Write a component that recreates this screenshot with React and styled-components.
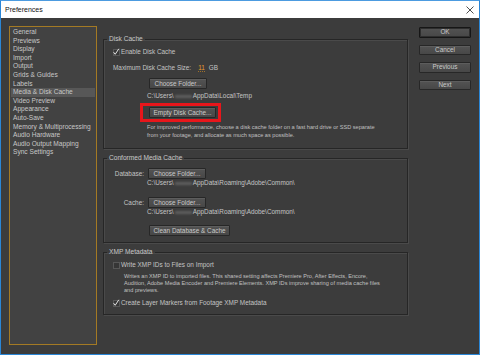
import styled, { createGlobalStyle } from 'styled-components';

const GlobalStyle = createGlobalStyle`
  html, body {
    margin: 0;
    padding: 0;
    background: #3c3c3c;
  }
  * {
    box-sizing: border-box;
  }
`;

// Outer window frame
const Window = styled.div`
  width: 480px;
  height: 355px;
  border: 1px solid #2a86d6;
  border-top-color: #4c9be0;
  display: flex;
  flex-direction: column;
  font-family: "Liberation Sans", Arial, sans-serif;
  color: #c4c4c4;
  overflow: hidden;
`;

const TitleBar = styled.div`
  height: 17px;
  background: #fff;
  display: flex;
  align-items: center;
  justify-content: space-between;
  padding: 0 5px 0 4px;
  color: #111;
  font-size: 7px;
  flex-shrink: 0;
`;

const Body = styled.div`
  flex: 1;
  background: #3c3c3c;
  display: flex;
  padding: 8px 8px 9px 8px;
  gap: 6px;
`;

// Left category list
const CategoryList = styled.ul`
  width: 88px;
  flex-shrink: 0;
  margin: 0;
  padding: 1px 1px;
  list-style: none;
  border: 1px solid #a47a24;
  background: #424242;
`;

const Category = styled.li`
  height: 8.6px;
  line-height: 8.6px;
  font-size: 6.6px;
  padding-left: 2px;
  white-space: nowrap;
  color: #c8c8c8;
  background: ${(p) => (p.$active ? '#575757' : 'transparent')};
`;

const Main = styled.div`
  width: 305px;
  flex-shrink: 0;
  display: flex;
  flex-direction: column;
  gap: 5px;
  padding-top: 9px;
`;

// Group boxes
const Group = styled.fieldset`
  margin: 0;
  padding: 0 0 ${(p) => p.$pb || 7}px 0;
  border: 1px solid #262626;
  box-shadow: inset 1px 1px 0 #4a4a4a, 1px 1px 0 #4a4a4a;
  display: flex;
  flex-direction: column;
  min-width: 0;
`;

const Legend = styled.legend`
  font-size: 6.6px;
  line-height: 8px;
  height: 8px;
  padding: 0 2px;
  margin-left: 3px;
  color: #c8c8c8;
`;

const Row = styled.div`
  display: flex;
  align-items: center;
  gap: ${(p) => p.$gap || 0}px;
  margin-top: ${(p) => p.$mt || 0}px;
  padding-left: ${(p) => p.$indent || 0}px;
  min-height: 8px;
  font-size: 6.4px;
  line-height: 8px;
  white-space: nowrap;
`;

const FieldLabel = styled.span`
  width: 31px;
  text-align: right;
  margin-right: 4px;
`;

const Path = styled.div`
  margin-top: ${(p) => p.$mt || 0}px;
  padding-left: 43px;
  height: 8px;
  font-size: 6.4px;
  line-height: 8px;
  white-space: nowrap;
`;

const Blur = styled.span`
  display: inline-block;
  width: 17px;
  height: 3px;
  margin: 0 1px;
  vertical-align: middle;
  background: #5e5e5e;
  filter: blur(0.8px);
`;

const Description = styled.div`
  margin-top: ${(p) => p.$mt || 0}px;
  padding-left: ${(p) => p.$indent || 0}px;
  padding-right: 20px;
  font-size: 5.6px;
  line-height: ${(p) => p.$lh || 8}px;
  color: #c0c0c0;
`;

const Hot = styled.span`
  color: #e59c2f;
  margin: 0 4px 0 7px;
  border-bottom: 1px dotted #a0702a;
  line-height: 7px;
`;

const Button = styled.button`
  display: block;
  width: ${(p) => p.$w}px;
  height: ${(p) => p.$h || 11}px;
  padding: 0;
  font-family: "Liberation Sans", Arial, sans-serif;
  font-size: 6.4px;
  line-height: 8px;
  color: #cacaca;
  background: linear-gradient(#535353, #474747);
  border: 1px solid ${(p) => (p.$primary ? '#161616' : '#272727')};
  box-shadow: ${(p) =>
    p.$primary ? 'inset 0 0 0 1px #2e2e2e' : 'inset 0 1px 0 #5d5d5d'};
  border-radius: 1px;
  flex-shrink: 0;
`;

// Annotation box drawn over the button
const Highlighted = styled.div`
  position: relative;
  width: fit-content;

  &::after {
    content: '';
    position: absolute;
    left: -9px;
    top: -4px;
    right: -5px;
    bottom: -4px;
    border: 3px solid #e8161b;
  }
`;

const ButtonIndent = styled.div`
  display: flex;
  margin-top: ${(p) => p.$mt || 0}px;
  padding-left: 45px;
`;

const Actions = styled.div`
  width: 52px;
  margin-left: 5px;
  padding-top: 1px;
  display: flex;
  flex-direction: column;
  gap: 7px;
`;

const CheckMark = ({ checked }) => (
  <svg width="8" height="8" viewBox="0 0 8 8" style={{ flexShrink: 0 }}>
    <rect x="1.5" y="1.5" width="6" height="6" fill="#363636" stroke="#575757" />
    {checked && (
      <path d="M1.6 4.2 L3.2 6.3 L6.8 0.8" fill="none" stroke="#e4e4e4" strokeWidth="1" />
    )}
  </svg>
);

const categories = [
  'General',
  'Previews',
  'Display',
  'Import',
  'Output',
  'Grids & Guides',
  'Labels',
  'Media & Disk Cache',
  'Video Preview',
  'Appearance',
  'Auto-Save',
  'Memory & Multiprocessing',
  'Audio Hardware',
  'Audio Output Mapping',
  'Sync Settings',
];

const UserPath = ({ rest }) => (
  <>
    C:\Users\<Blur />
    {rest}
  </>
);

const App = () => {
  return (
    <>
      <GlobalStyle />
      <Window>
        <TitleBar>
          <span>Preferences</span>
          <svg width="8" height="8" viewBox="0 0 8 8">
            <path d="M0.5 0.5 L7.5 7.5 M7.5 0.5 L0.5 7.5" stroke="#222" strokeWidth="0.8" />
          </svg>
        </TitleBar>
        <Body>
          <CategoryList>
            {categories.map((c) => (
              <Category key={c} $active={c === 'Media & Disk Cache'}>
                {c}
              </Category>
            ))}
          </CategoryList>

          <Main>
            <Group $pb={9}>
              <Legend>Disk Cache</Legend>
              <Row $mt={5} $indent={8} $gap={1}>
                <CheckMark checked />
                Enable Disk Cache
              </Row>
              <Row $mt={8} $indent={9}>
                Maximum Disk Cache Size:
                <Hot>11</Hot>
                GB
              </Row>
              <ButtonIndent $mt={6}>
                <Button $w={58}>Choose Folder...</Button>
              </ButtonIndent>
              <Path $mt={3}>
                <UserPath rest="AppData\Local\Temp" />
              </Path>
              <ButtonIndent $mt={7}>
                <Highlighted>
                  <Button $w={67}>Empty Disk Cache...</Button>
                </Highlighted>
              </ButtonIndent>
              <Description $mt={5} $indent={43}>
                For improved performance, choose a disk cache folder on a fast hard drive or SSD separate
                from your footage, and allocate as much space as possible.
              </Description>
            </Group>

            <Group $pb={6}>
              <Legend>Conformed Media Cache</Legend>
              <Row $mt={6} $indent={9}>
                <FieldLabel>Database:</FieldLabel>
                <Button $w={58}>Choose Folder...</Button>
              </Row>
              <Path>
                <UserPath rest="AppData\Roaming\Adobe\Common\" />
              </Path>
              <Row $mt={10} $indent={9}>
                <FieldLabel>Cache:</FieldLabel>
                <Button $w={58}>Choose Folder...</Button>
              </Row>
              <Path>
                <UserPath rest="AppData\Roaming\Adobe\Common\" />
              </Path>
              <ButtonIndent $mt={9}>
                <Button $w={81}>Clean Database &amp; Cache</Button>
              </ButtonIndent>
            </Group>

            <Group $pb={7}>
              <Legend>XMP Metadata</Legend>
              <Row $mt={5} $indent={8} $gap={1}>
                <CheckMark />
                Write XMP IDs to Files on Import
              </Row>
              <Description $mt={3.5} $indent={20} $lh={7.2}>
                Writes an XMP ID to imported files. This shared setting affects Premiere Pro, After Effects, Encore,
                Audition, Adobe Media Encoder and Premiere Elements. XMP IDs improve sharing of media cache files
                and previews.
              </Description>
              <Row $mt={5} $indent={8} $gap={1}>
                <CheckMark checked />
                Create Layer Markers from Footage XMP Metadata
              </Row>
            </Group>
          </Main>

          <Actions>
            <Button $w={52} $h={10.5} $primary>OK</Button>
            <Button $w={52} $h={10.5}>Cancel</Button>
            <Button $w={52} $h={10.5}>Previous</Button>
            <Button $w={52} $h={10.5}>Next</Button>
          </Actions>
        </Body>
      </Window>
    </>
  );
};

export default App;
